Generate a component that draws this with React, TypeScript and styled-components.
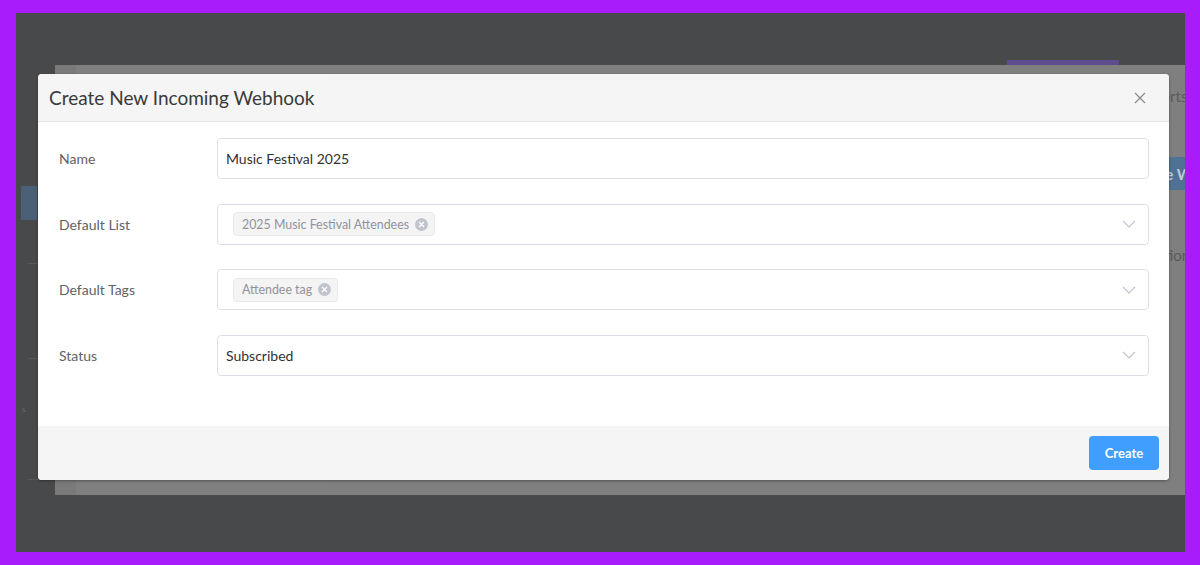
import React from 'react'
import styled, { createGlobalStyle } from 'styled-components'

const GlobalStyle = createGlobalStyle`
  html, body {
    margin: 0;
    padding: 0;
    background: #a81cfc;
  }
  * {
    box-sizing: border-box;
  }
  body {
    font-family: Lato, "Open Sans", "Liberation Sans", sans-serif;
  }
`

const Frame = styled.div`
  width: 1200px;
  height: 565px;
  padding: 13px 15px 13px 16px;
  background: #a81cfc;
`

const Screen = styled.div`
  position: relative;
  width: 1169px;
  height: 539px;
  background: #48494b;
  overflow: hidden;
  display: flex;
`

/* dimmed app behind the dialog */
const Sidebar = styled.aside`
  width: 39px;
  flex-shrink: 0;
  margin: 47px 0 52px;
  padding-top: 126px;
  display: flex;
  flex-direction: column;
`

const SideActive = styled.div`
  width: 16px;
  height: 34px;
  margin-left: 5px;
  background: #4a6077;
`

const SideDivider = styled.div<{ $gap: number }>`
  height: 1px;
  margin: ${p => p.$gap}px 0 0 12px;
  background: #56575a;
`

const SideGlyph = styled.span`
  margin: 46px 0 0 6px;
  font-size: 8px;
  line-height: 8px;
  color: #6a6b6d;
`

const Main = styled.div`
  flex: 1;
  display: flex;
  flex-direction: column;
  padding-bottom: 57px;
`

const TopStrip = styled.div`
  height: 52px;
  display: flex;
  justify-content: flex-end;
  align-items: flex-end;
  padding-right: 66px;
`

const TopButton = styled.div`
  width: 112px;
  height: 5px;
  background: #5e4d8c;
`

const PageCard = styled.div`
  flex: 1;
  background: #7f7f7f;
  display: flex;
  overflow: hidden;
`

const PageBody = styled.div`
  flex: 1;
  display: flex;
`

const PageColumn = styled.div<{ $w: number; $tone: string }>`
  width: ${p => p.$w}px;
  flex-shrink: 0;
  background: ${p => p.$tone};
`

const RightRail = styled.div`
  width: 65px;
  flex-shrink: 0;
  display: flex;
  flex-direction: column;
  white-space: nowrap;
`

const RailText = styled.span<{ $top: number; $indent: number }>`
  margin: ${p => p.$top}px 0 0 ${p => p.$indent}px;
  font-size: 15px;
  line-height: 20px;
  color: #5b5b5b;
`

const RailButton = styled.div`
  margin-top: 51px;
  height: 33px;
  padding: 0 9px;
  display: flex;
  align-items: center;
  background: #4f7294;
  color: #c3cad2;
  font-size: 15px;
  font-weight: 700;
`

/* dialog */
const Modal = styled.div`
  position: absolute;
  left: 22px;
  top: 61px;
  width: 1131px;
  background: #ffffff;
  border-radius: 4px;
  box-shadow: 0 1px 3px rgba(0, 0, 0, 0.35);
  overflow: hidden;
`

const Header = styled.div`
  height: 48px;
  padding: 0 23px 0 11px;
  display: flex;
  align-items: center;
  justify-content: space-between;
  background: #f5f5f5;
  border-bottom: 1px solid #e4e4e4;
`

const Title = styled.h2`
  margin: 0;
  font-size: 19px;
  font-weight: 400;
  color: #3a3a3a;
`

const CloseButton = styled.button`
  border: 0;
  padding: 0;
  background: none;
  width: 12px;
  height: 12px;
  display: flex;
  color: #8a8a8a;
`

const Body = styled.div`
  padding: 16px 20px 50px 21px;
  display: flex;
  flex-direction: column;
  gap: 24.6px;
`

const Row = styled.div`
  display: flex;
  align-items: center;
`

const Label = styled.label`
  width: 158px;
  flex-shrink: 0;
  font-size: 14px;
  color: #606266;
`

const Field = styled.div`
  flex: 1;
  height: 41px;
  border: 1px solid #dcdfe6;
  border-radius: 4px;
  display: flex;
  align-items: center;
  padding: 0 12px 0 8px;
  font-size: 14px;
  color: #303133;
`

const FieldValue = styled.span`
  flex: 1;
`

const Tags = styled.div`
  flex: 1;
  display: flex;
  padding-left: 7px;
`

const Tag = styled.span`
  height: 24px;
  display: inline-flex;
  align-items: center;
  gap: 6px;
  padding: 0 6px 0 8px;
  background: #f4f4f5;
  border: 1px solid #e9e9eb;
  border-radius: 4px;
  font-size: 12.4px;
  color: #909399;
`

const TagClose = styled.span`
  width: 13px;
  height: 13px;
  border-radius: 50%;
  background: #c0c4cc;
  display: flex;
  align-items: center;
  justify-content: center;
`

const Footer = styled.div`
  height: 54px;
  padding: 10px;
  display: flex;
  justify-content: flex-end;
  background: #f5f5f5;
`

const PrimaryButton = styled.button`
  width: 70px;
  height: 34px;
  border: 0;
  border-radius: 4px;
  background: #409eff;
  color: #ffffff;
  font-family: inherit;
  font-size: 13px;
  font-weight: 700;
`

const Chevron = () => (
  <svg width="14" height="8" viewBox="0 0 14 8" fill="none">
    <path d="M1 1l6 6 6-6" stroke="#c0c4cc" strokeWidth="1.2" />
  </svg>
)

const XIcon = () => (
  <svg width="12" height="12" viewBox="0 0 12 12" fill="none">
    <path d="M1 1l10 10M11 1L1 11" stroke="currentColor" strokeWidth="1.2" />
  </svg>
)

const TagX = () => (
  <svg width="7" height="7" viewBox="0 0 7 7" fill="none">
    <path d="M1 1l5 5M6 1L1 6" stroke="#ffffff" strokeWidth="1.2" />
  </svg>
)

type RowData = {
  label: string
  value?: string
  tags?: string[]
  select?: boolean
}

const rows: RowData[] = [
  { label: 'Name', value: 'Music Festival 2025' },
  { label: 'Default List', tags: ['2025 Music Festival Attendees'], select: true },
  { label: 'Default Tags', tags: ['Attendee tag'], select: true },
  { label: 'Status', value: 'Subscribed', select: true },
]

export default function App() {
  return (
    <>
      <GlobalStyle />
      <Frame>
        <Screen>
          <Sidebar>
            <SideActive />
            <SideDivider $gap={43} />
            <SideDivider $gap={94} />
            <SideGlyph>s</SideGlyph>
            <SideDivider $gap={66} />
          </Sidebar>
          <Main>
            <TopStrip>
              <TopButton />
            </TopStrip>
            <PageCard>
              <PageBody>
                <PageColumn $w={21} $tone="#7a7a7a" />
                <PageColumn $w={252} $tone="#808080" />
              </PageBody>
              <RightRail>
                <RailText $top={21} $indent={17}>Exports</RailText>
                <RailButton>Create Webhook</RailButton>
                <RailText $top={55} $indent={27}>Actions</RailText>
              </RightRail>
            </PageCard>
          </Main>

          <Modal>
            <Header>
              <Title>Create New Incoming Webhook</Title>
              <CloseButton aria-label="Close">
                <XIcon />
              </CloseButton>
            </Header>
            <Body>
              {rows.map(r => (
                <Row key={r.label}>
                  <Label>{r.label}</Label>
                  <Field>
                    {r.tags ? (
                      <Tags>
                        {r.tags.map(t => (
                          <Tag key={t}>
                            {t}
                            <TagClose>
                              <TagX />
                            </TagClose>
                          </Tag>
                        ))}
                      </Tags>
                    ) : (
                      <FieldValue>{r.value}</FieldValue>
                    )}
                    {r.select && <Chevron />}
                  </Field>
                </Row>
              ))}
            </Body>
            <Footer>
              <PrimaryButton>Create</PrimaryButton>
            </Footer>
          </Modal>
        </Screen>
      </Frame>
    </>
  )
}
